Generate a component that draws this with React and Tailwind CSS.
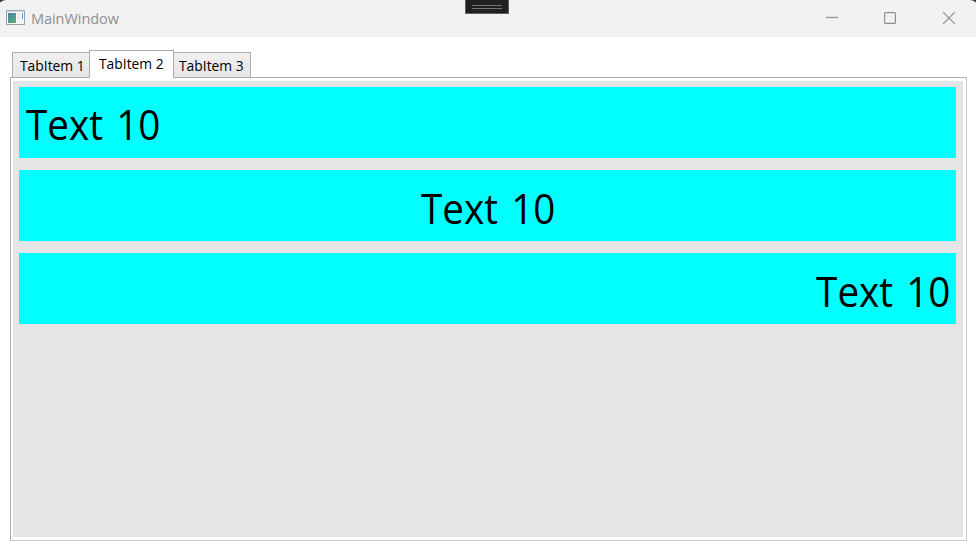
const uiFont = "font-['Segoe_UI','Open_Sans','Noto_Sans',sans-serif]";

function AppIcon() {
  return (
    <svg width="20" height="16" viewBox="0 0 20 16" className="shrink-0">
      <defs>
        <linearGradient id="pane" x1="0" y1="0" x2="1" y2="1">
          <stop offset="0" stopColor="#4a7fb5" />
          <stop offset="1" stopColor="#55b36d" />
        </linearGradient>
      </defs>
      <rect x="0.5" y="0.5" width="18" height="14" fill="#f8f9fa" stroke="#9a9fa6" />
      <rect x="0" y="0" width="19" height="1.5" fill="#a3aab3" />
      <rect x="2" y="3" width="8" height="10" fill="url(#pane)" />
      <rect x="11" y="3" width="4" height="10" fill="#eceeef" />
      <rect x="16" y="3" width="1" height="6" fill="#5b8fc0" />
    </svg>
  );
}

function TitleBar() {
  return (
    <header className="relative flex h-[37px] shrink-0 items-start bg-[#f2f2f2] text-[#909090]">
      <div className="flex items-start pl-1.5 pt-[10px]">
        <AppIcon />
        <span className="ml-[5px] -mt-[1px] text-[14.5px] leading-5 tracking-[-0.05px] whitespace-nowrap">MainWindow</span>
      </div>
      <svg className="ml-auto mr-5 mt-[11px] shrink-0" width="130" height="14" viewBox="0 0 130 14" fill="none" stroke="#8e8e8e" strokeWidth="1.2">
        <path d="M0 6.5H12" />
        <rect x="58.6" y="1.6" width="10.8" height="10.8" rx="1" />
        <path d="M117.2 1.2L128.8 12.8M128.8 1.2L117.2 12.8" />
      </svg>
      <div className="absolute left-[465px] top-0 flex h-[14px] w-[44px] flex-col items-center gap-[2px] border border-t-0 border-[#606060] bg-[#202020] pt-[5px]">
        <div className="h-px w-[30px] bg-[#747474]" />
        <div className="h-px w-[30px] bg-[#747474]" />
      </div>
      <svg className="absolute left-0 top-0" width="6" height="3"><path d="M0 0H6Q2 0 0 2.5Z" fill="#333" /></svg>
      <svg className="absolute right-0 top-0" width="6" height="3"><path d="M6 0H0Q4 0 6 2.5Z" fill="#333" /></svg>
    </header>
  );
}

function Tab({ label, className }) {
  return (
    <div className={`border border-b-0 border-[#acacac] text-[14.4px] leading-5 whitespace-nowrap ${className}`}>
      <span className="inline-block origin-left scale-x-[0.962]">{label}</span>
    </div>
  );
}

function TextBar({ className, textClassName }) {
  return (
    <div className={`h-[70.8px] shrink-0 bg-[#00ffff] pl-[7px] pr-[6px] pt-[8.6px] text-[42.7px] leading-[58px] whitespace-nowrap ${className}`}>
      <span className={`inline-block scale-x-[0.905] [word-spacing:3.5px] ${textClassName}`}>Text 10</span>
    </div>
  );
}

export default function App() {
  return (
    <div className={`flex h-[549px] w-[976px] flex-col overflow-hidden bg-white text-black ${uiFont}`}>
      <TitleBar />
      <div className="z-10 flex h-[41px] shrink-0 items-end pl-3">
        <Tab label="TabItem 1" className="mb-px h-[25px] w-[77px] border-r-0 bg-linear-to-b from-[#f0f0f0] to-[#e5e5e5] pl-[6.5px] pt-[3px]" />
        <Tab label="TabItem 2" className="h-[28px] w-[85px] bg-white pl-[9px] pt-[3px]" />
        <Tab label="TabItem 3" className="mb-px h-[25px] w-[77px] border-l-0 bg-linear-to-b from-[#f0f0f0] to-[#e5e5e5] pl-[5px] pt-[3px]" />
      </div>
      <main className="-mt-px ml-[10px] h-[464px] w-[957px] shrink-0 border border-r-[#c8c8c8] border-b-[#c8c8c8] border-l-[#acacac] border-t-[#acacac] bg-white pl-[2.4px] pr-[2.8px] pt-[2.6px] pb-[3px]">
        <div className="flex h-full flex-col gap-[12.5px] bg-[#e5e5e5] pl-[5.9px] pr-[6.9px] pt-[6.2px]">
          <TextBar className="text-left" textClassName="origin-left" />
          <TextBar className="text-center" textClassName="origin-center" />
          <TextBar className="text-right" textClassName="origin-right" />
        </div>
      </main>
    </div>
  );
}
